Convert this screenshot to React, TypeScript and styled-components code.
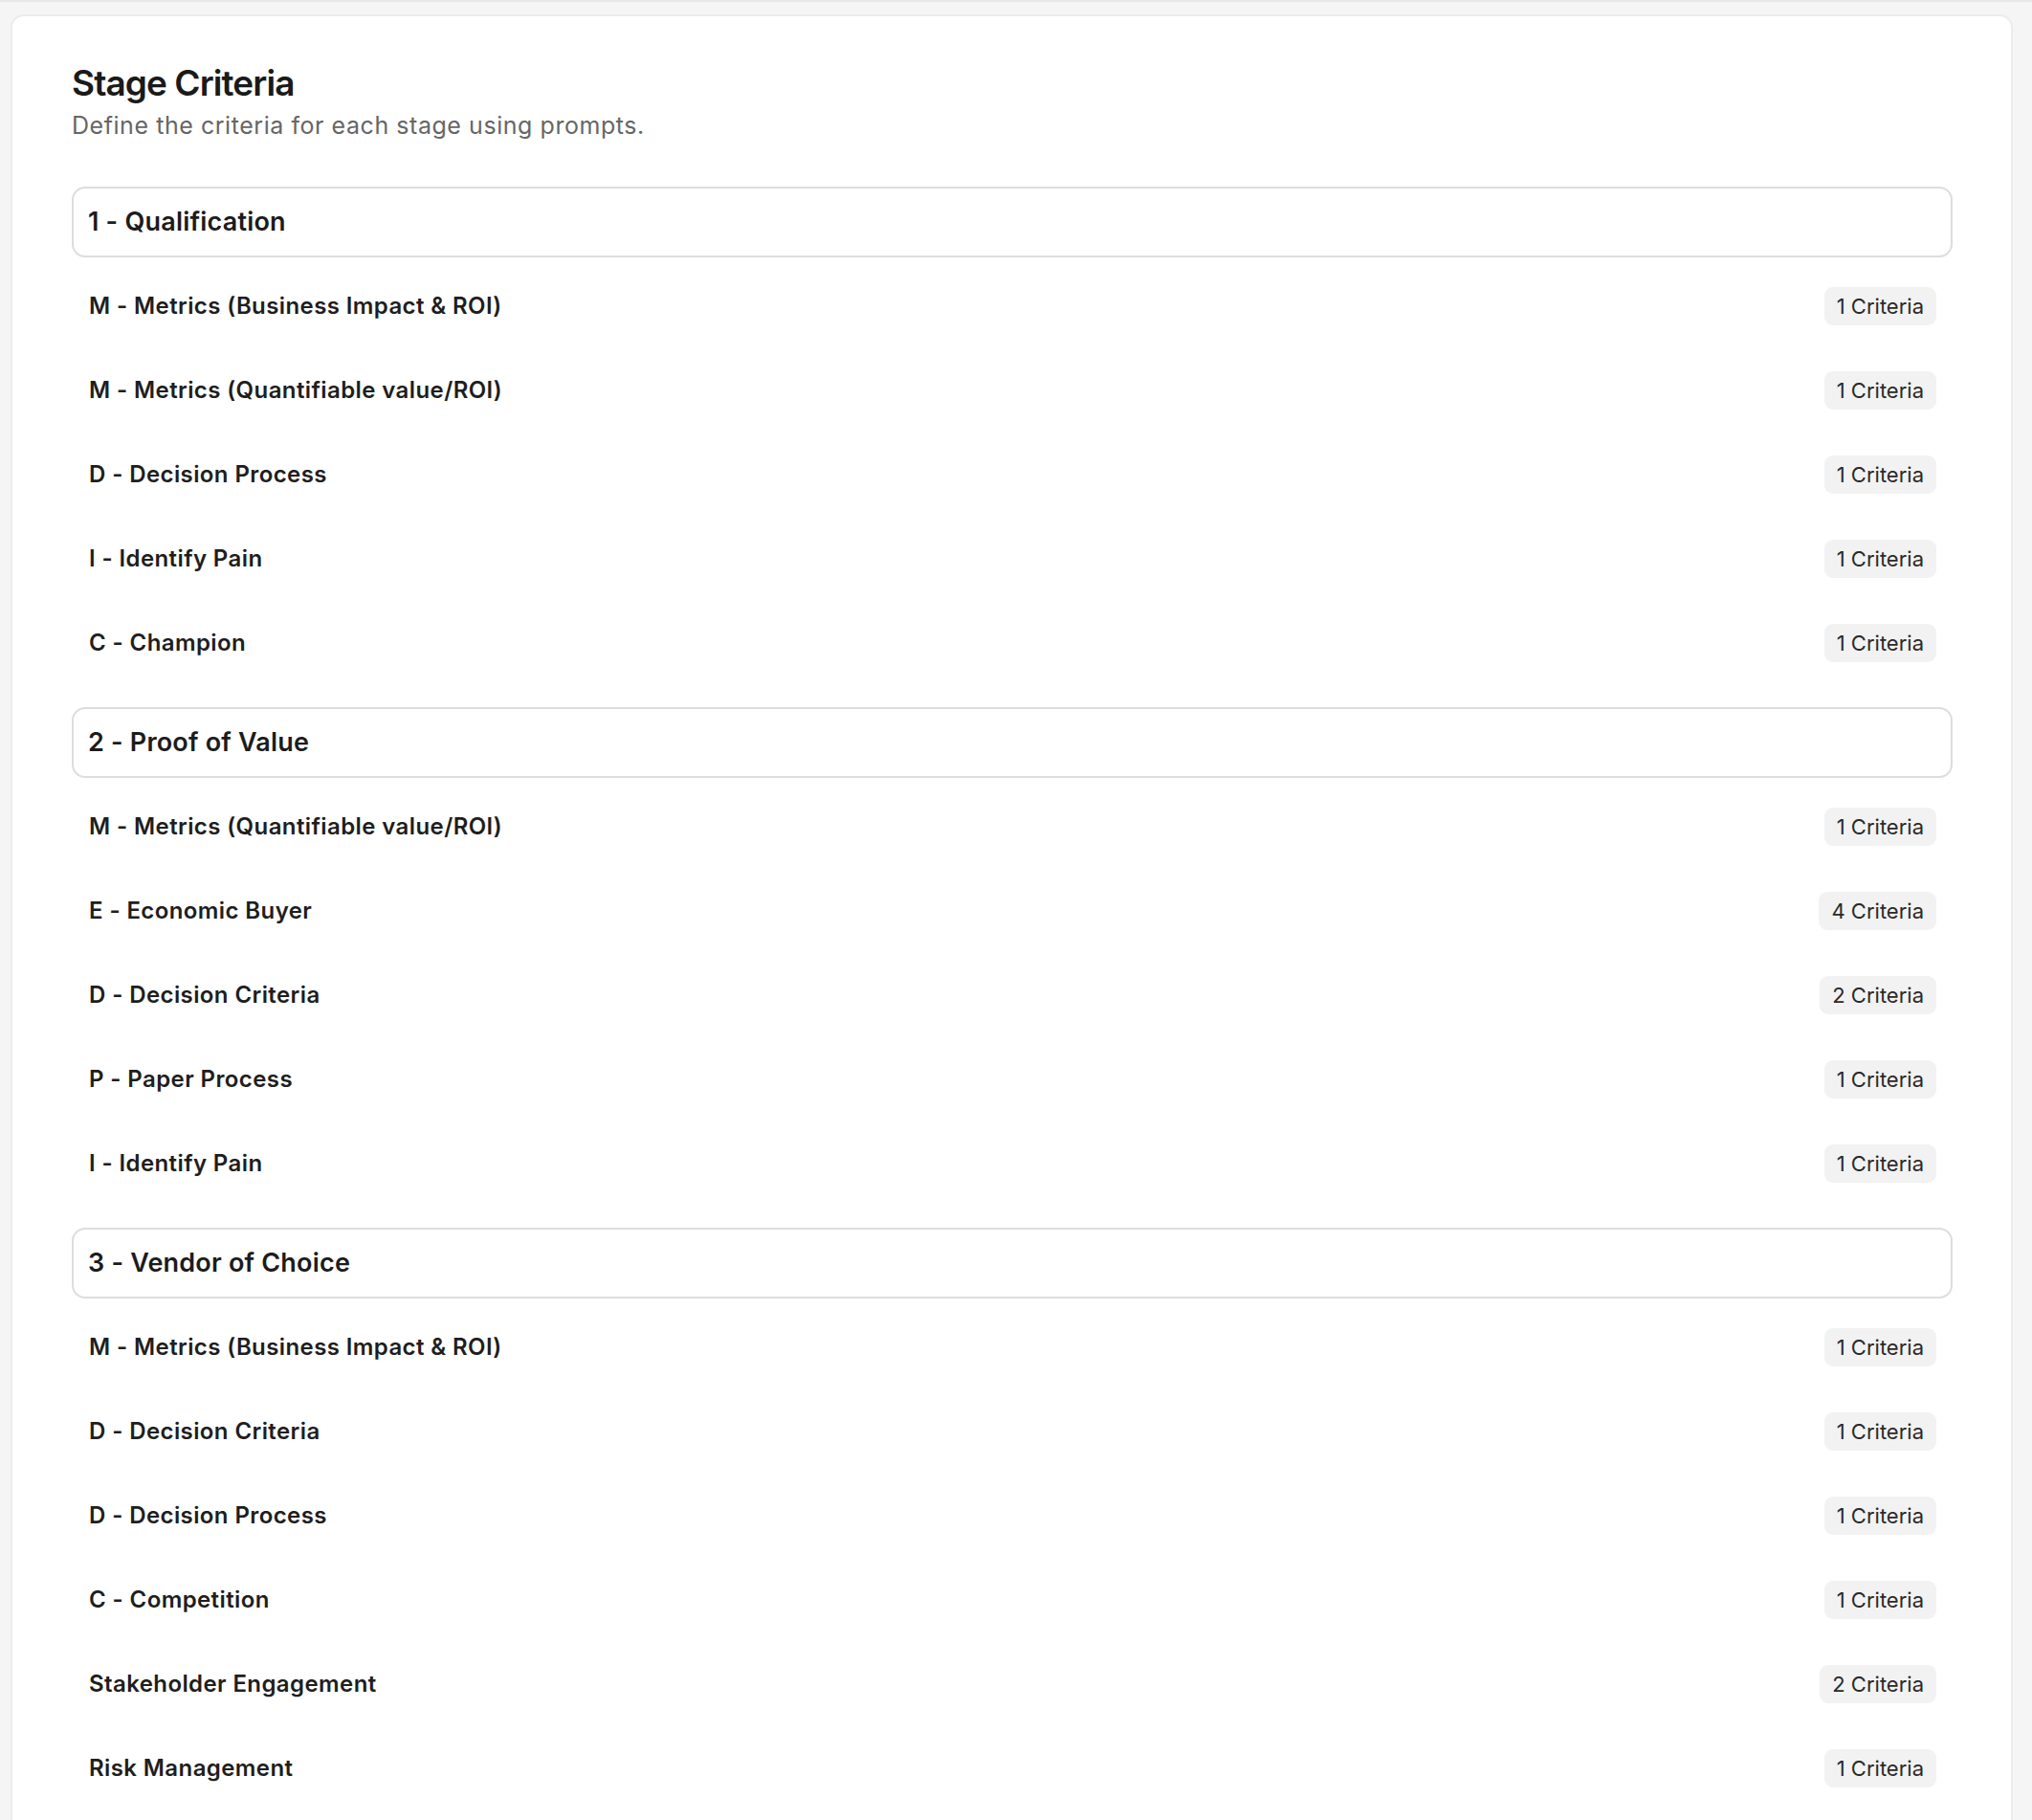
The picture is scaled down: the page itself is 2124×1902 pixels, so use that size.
import React from 'react';
import styled, { createGlobalStyle } from 'styled-components';

type Criterion = {
    label: string;
    count: number;
};

type Stage = {
    title: string;
    criteria: Criterion[];
};

const stages: Stage[] = [
    {
        title: '1 - Qualification',
        criteria: [
            { label: 'M - Metrics (Business Impact & ROI)', count: 1 },
            { label: 'M - Metrics (Quantifiable value/ROI)', count: 1 },
            { label: 'D - Decision Process', count: 1 },
            { label: 'I - Identify Pain', count: 1 },
            { label: 'C - Champion', count: 1 },
        ],
    },
    {
        title: '2 - Proof of Value',
        criteria: [
            { label: 'M - Metrics (Quantifiable value/ROI)', count: 1 },
            { label: 'E - Economic Buyer', count: 4 },
            { label: 'D - Decision Criteria', count: 2 },
            { label: 'P - Paper Process', count: 1 },
            { label: 'I - Identify Pain', count: 1 },
        ],
    },
    {
        title: '3 - Vendor of Choice',
        criteria: [
            { label: 'M - Metrics (Business Impact & ROI)', count: 1 },
            { label: 'D - Decision Criteria', count: 1 },
            { label: 'D - Decision Process', count: 1 },
            { label: 'C - Competition', count: 1 },
            { label: 'Stakeholder Engagement', count: 2 },
            { label: 'Risk Management', count: 1 },
        ],
    },
];

const App: React.FC = () => {
    return (
        <>
            <GlobalStyle />
            <Page>
                <Card>
                    <Title>Stage Criteria</Title>
                    <Subtitle>Define the criteria for each stage using prompts.</Subtitle>
                    <StageList>
                        {stages.map((stage) => (
                            <StageSection key={stage.title}>
                                <StageHeader>{stage.title}</StageHeader>
                                <CriteriaList>
                                    {stage.criteria.map((item, i) => (
                                        <CriteriaRow key={i}>
                                            <CriteriaLabel>{item.label}</CriteriaLabel>
                                            <CountPill>{item.count} Criteria</CountPill>
                                        </CriteriaRow>
                                    ))}
                                </CriteriaList>
                            </StageSection>
                        ))}
                    </StageList>
                </Card>
            </Page>
        </>
    );
};

// Глобальные стили страницы
const GlobalStyle = createGlobalStyle`
    html, body {
        margin: 0;
        padding: 0;
        background: #f5f5f5;
    }
    body {
        font-family: Inter, "Noto Sans", "Liberation Sans", sans-serif;
        color: #1c1c1c;
        border-top: 2px solid #e8e8e8;
    }`
;

// Обёртка страницы
const Page = styled.div`
    padding: 13px 20px 0 11px;`
;

// Белая карточка
const Card = styled.div`
    background: #ffffff;
    border: 2px solid #ececec;
    border-bottom: none;
    border-radius: 14px 14px 0 0;
    padding: 50px 61px 48px 62px;`
;

// Заголовок
const Title = styled.h1`
    margin: 0;
    font-size: 37px;
    line-height: 40px;
    font-weight: 600;
    letter-spacing: -0.025em;
    color: #1a1a1a;`
;

// Подзаголовок
const Subtitle = styled.p`
    margin: 8px 0 0;
    font-size: 25px;
    line-height: 32px;
    letter-spacing: 0.55px;
    color: #666666;`
;

const StageList = styled.div`
    margin-top: 48px;
    display: flex;
    flex-direction: column;
    gap: 23px;`
;

const StageSection = styled.section`
    display: flex;
    flex-direction: column;
    gap: 7px;`
;

// Заголовок этапа
const StageHeader = styled.div`
    border: 2px solid #dddddd;
    border-radius: 14px;
    padding: 17px 15px;
    font-size: 27px;
    line-height: 36px;
    font-weight: 600;
    letter-spacing: 0.2px;
    color: #1c1c1c;`
;

const CriteriaList = styled.div`
    display: flex;
    flex-direction: column;`
;

// Строка критерия
const CriteriaRow = styled.div`
    display: flex;
    align-items: center;
    justify-content: space-between;
    padding: 24px 17px 24px 18px;`
;

const CriteriaLabel = styled.span`
    font-size: 24px;
    line-height: 32px;
    font-weight: 600;
    letter-spacing: 0.4px;
    color: #1e1e1e;`
;

// Плашка с количеством
const CountPill = styled.span`
    display: inline-flex;
    align-items: center;
    height: 40px;
    padding: 0 13px;
    border-radius: 9px;
    background: #f2f2f2;
    font-size: 22px;
    color: #2a2a2a;
    white-space: nowrap;`
;

export default App;
